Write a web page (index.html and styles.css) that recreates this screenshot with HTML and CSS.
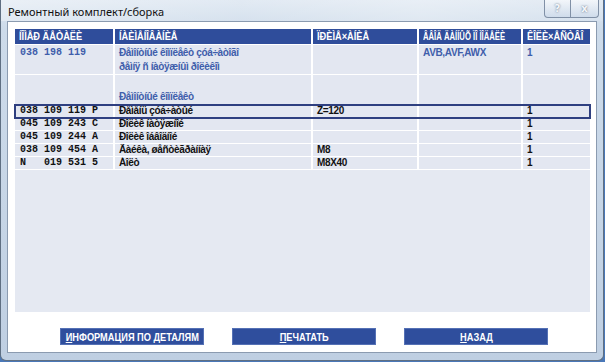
FILE: index.html
```html
<!DOCTYPE html>
<html lang="ru">
<head>
    <meta charset="UTF-8">
    <title>Ремонтный комплект/сборка</title>
    <link rel="stylesheet" href="styles.css">
</head>
<body>
    <div class="window">
        <div class="titlebar">
            <span class="title">Ремонтный комплект/сборка</span>
            <div class="caption-buttons">
                <span class="cap-btn help">?</span>
                <span class="cap-btn close">x</span>
            </div>
        </div>

        <div class="client">
            <div class="list">
                <div class="row head">
                    <div class="cell"><span class="n">ÍÎÌÅÐ ÄÅÒÀËÈ</span></div>
                    <div class="cell"><span class="n">ÍÀÈÌÅÍÎÂÀÍÈÅ</span></div>
                    <div class="cell"><span class="n">ÏÐÈÌÅ×ÀÍÈÅ</span></div>
                    <div class="cell"><span class="n tight">ÂÂÎÄ ÄÀÍÍÛÕ ÏÎ ÌÎÄÅËÈ</span></div>
                    <div class="cell"><span class="n">ÊÎËÈ×ÅÑÒÂÎ</span></div>
                </div>

                <div class="row group">
                    <div class="cell code">038 198 119</div>
                    <div class="cell">Ðåìîíòíûé êîìïëåêò çóá÷àòîãî<br>ðåìíÿ ñ íàòÿæíûì ðîëèêîì</div>
                    <div class="cell"></div>
                    <div class="cell">AVB,AVF,AWX</div>
                    <div class="cell">1</div>
                </div>
                <div class="row group">
                    <div class="cell code"></div>
                    <div class="cell"><br>Ðåìîíòíûé êîìïëåêò</div>
                    <div class="cell"></div>
                    <div class="cell"></div>
                    <div class="cell"></div>
                </div>

                <div class="row item selected">
                    <div class="cell code">038 109 119 P</div>
                    <div class="cell">Ðåìåíü çóá÷àòûé</div>
                    <div class="cell">Z=120</div>
                    <div class="cell"></div>
                    <div class="cell">1</div>
                </div>
                <div class="row item">
                    <div class="cell code">045 109 243 C</div>
                    <div class="cell">Ðîëèê íàòÿæíîé</div>
                    <div class="cell"></div>
                    <div class="cell"></div>
                    <div class="cell">1</div>
                </div>
                <div class="row item">
                    <div class="cell code">045 109 244 A</div>
                    <div class="cell">Ðîëèê îáâîäíîé</div>
                    <div class="cell"></div>
                    <div class="cell"></div>
                    <div class="cell">1</div>
                </div>
                <div class="row item">
                    <div class="cell code">038 109 454 A</div>
                    <div class="cell">Ãàéêà, øåñòèãðàííàÿ</div>
                    <div class="cell">M8</div>
                    <div class="cell"></div>
                    <div class="cell">1</div>
                </div>
                <div class="row item">
                    <div class="cell code">N   019 531 5</div>
                    <div class="cell">Áîëò</div>
                    <div class="cell">M8X40</div>
                    <div class="cell"></div>
                    <div class="cell">1</div>
                </div>
            </div>

            <div class="buttons">
                <button class="btn"><span class="n"><u>И</u>НФОРМАЦИЯ ПО ДЕТАЛЯМ</span></button>
                <button class="btn"><span class="n"><u>П</u>ЕЧАТАТЬ</span></button>
                <button class="btn"><span class="n"><u>Н</u>АЗАД</span></button>
            </div>
        </div>
    </div>
</body>
</html>
```

FILE: styles.css
```css
body {
    margin: 0;
    width: 605px;
    height: 362px;
    overflow: hidden;
    background: #4a78b8;
    font-family: 'Liberation Sans', Arial, sans-serif;
}
.window {
    height: 361px;
    margin-right: 1px;
    border: 1px solid #5f6f82;
    border-top: none;
    border-radius: 0 0 6px 6px;
    background: linear-gradient(180deg, #dfe8f2 0%, #cddbea 8%, #c6d5e6 60%, #bfcfe2 100%);
    display: flex;
    flex-direction: column;
    box-sizing: border-box;
}
.titlebar {
    height: 21px;
    display: flex;
    justify-content: space-between;
    align-items: flex-start;
    padding-left: 7px;
    background: linear-gradient(90deg, rgba(255,255,255,0.35) 0%, rgba(255,255,255,0.1) 40%, rgba(255,255,255,0.3) 70%, rgba(255,255,255,0.1) 100%);
}
.title {
    font-family: 'Noto Sans', 'Open Sans', sans-serif;
    font-size: 11px;
    line-height: 14px;
    margin-top: 5px;
    color: #101010;
}
.caption-buttons {
    display: flex;
    margin-right: 4px;
}
.cap-btn {
    height: 17px;
    border: 1px solid #8090a6;
    border-top: none;
    display: flex;
    align-items: center;
    justify-content: center;
    font-family: 'DejaVu Sans', sans-serif;
    font-weight: bold;
    font-size: 10px;
    color: #f4f6fa;
    text-shadow: 0 0 2px #55657a;
    background: linear-gradient(180deg, rgba(255,255,255,0.55), rgba(200,214,232,0.6));
}
.help {
    width: 25px;
    border-radius: 0 0 0 4px;
}
.close {
    width: 27px;
    border-left: none;
    border-radius: 0 0 4px 0;
}
.client {
    flex: 1;
    margin: 0 6px 7px 6px;
    background: #ffffff;
    border: 1px solid #8b9bb0;
    padding: 7px 6px 0 7px;
    display: flex;
    flex-direction: column;
}
.list {
    height: 283px;
    background: #e5e9f2;
}
.row {
    display: grid;
    grid-template-columns: 98px 196px 104px 102px 67px;
    column-gap: 2px;
    background: #ffffff;
    padding-bottom: 1px;
}
.cell {
    background: #e3e7f1;
    padding: 0 4px;
    font-size: 10px;
    font-weight: bold;
    letter-spacing: -0.35px;
    white-space: pre;
    overflow: hidden;
}
.n {
    display: inline-block;
    transform: scaleX(0.84);
    transform-origin: left center;
}
.n.tight {
    transform: scaleX(0.7);
}
.head .cell {
    background: #2f4d9b;
    color: #ffffff;
    font-size: 11px;
    line-height: 15px;
    letter-spacing: 0;
}
.code {
    font-family: 'Liberation Mono', 'Courier New', monospace;
    font-size: 10px;
    letter-spacing: 0;
    padding-left: 5px;
}
.group .cell {
    color: #3f5eab;
    line-height: 14px;
    padding-top: 1px;
}
.item .cell {
    color: #111111;
    line-height: 12px;
}
.selected {
    outline: 2px solid #2e3f80;
    outline-offset: -1px;
    position: relative;
}
.buttons {
    display: flex;
    gap: 28px;
    padding: 16px 0 0 45px;
}
.btn {
    width: 144px;
    height: 17px;
    border: 1px solid #5571b5;
    background: #2f4e9d;
    color: #ffffff;
    font-family: 'Liberation Sans', Arial, sans-serif;
    font-weight: bold;
    font-size: 11px;
    white-space: nowrap;
    padding: 0;
    display: flex;
    align-items: center;
    justify-content: center;
    cursor: pointer;
}
.btn .n {
    transform-origin: center;
}
```
